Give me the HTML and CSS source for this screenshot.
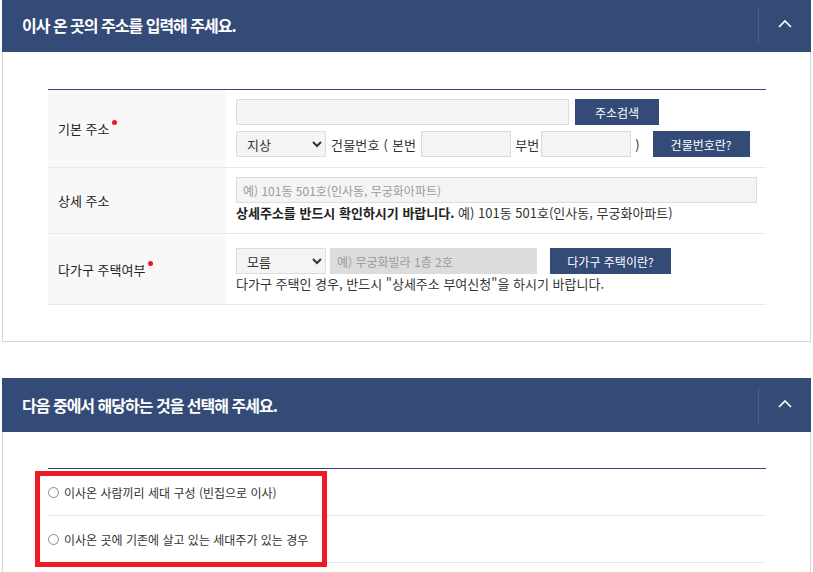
FILE: index.html
```html
<!DOCTYPE html>
<html lang="ko">
<head>
    <meta charset="UTF-8">
    <meta name="viewport" content="width=device-width, initial-scale=1.0">
    <title>전입신고 - 주소 입력</title>
    <link rel="stylesheet" href="styles.css">
</head>
<body>
<div class="page">

    <!-- 주소 입력 -->
    <section class="panel">
        <div class="panel-head">
            <h2 class="panel-title">이사 온 곳의 주소를 입력해 주세요.</h2>
            <button type="button" class="panel-toggle" aria-label="접기">
                <svg width="14" height="9" viewBox="0 0 14 9"><path d="M1 8 L7 2 L13 8" fill="none" stroke="#fff" stroke-width="1.6"/></svg>
            </button>
        </div>
        <div class="panel-body">
            <table class="form-table">
                <tr>
                    <th><span class="req">기본 주소</span></th>
                    <td class="row-addr">
                        <div class="line">
                            <input type="text" class="input-addr">
                            <button type="button" class="btn btn-search">주소검색</button>
                        </div>
                        <div class="line">
                            <select class="select-small">
                                <option>지상</option>
                                <option>지하</option>
                            </select>
                            <span class="txt txt-first">건물번호 ( 본번</span>
                            <input type="text" class="input-num">
                            <span class="txt">부번</span>
                            <input type="text" class="input-num">
                            <span class="txt">)</span>
                            <button type="button" class="btn btn-bldg">건물번호란?</button>
                        </div>
                    </td>
                </tr>
                <tr>
                    <th>상세 주소</th>
                    <td class="row-detail">
                        <div class="line">
                            <input type="text" class="input-detail" placeholder="예) 101동 501호(인사동, 무궁화아파트)">
                        </div>
                        <p class="hint"><strong>상세주소를 반드시 확인하시기 바랍니다.</strong> 예) 101동 501호(인사동, 무궁화아파트)</p>
                    </td>
                </tr>
                <tr>
                    <th><span class="req">다가구 주택여부</span></th>
                    <td class="row-multi">
                        <div class="line">
                            <select class="select-small">
                                <option>모름</option>
                                <option>예</option>
                                <option>아니오</option>
                            </select>
                            <input type="text" class="input-unit" placeholder="예) 무궁화빌라 1층 2호" disabled>
                            <button type="button" class="btn btn-multi">다가구 주택이란?</button>
                        </div>
                        <p class="hint">다가구 주택인 경우, 반드시 "상세주소 부여신청"을 하시기 바랍니다.</p>
                    </td>
                </tr>
            </table>
        </div>
    </section>

    <!-- 세대 구성 선택 -->
    <section class="panel">
        <div class="panel-head">
            <h2 class="panel-title">다음 중에서 해당하는 것을 선택해 주세요.</h2>
            <button type="button" class="panel-toggle" aria-label="접기">
                <svg width="14" height="9" viewBox="0 0 14 9"><path d="M1 8 L7 2 L13 8" fill="none" stroke="#fff" stroke-width="1.6"/></svg>
            </button>
        </div>
        <div class="panel-body panel-body-choices">
            <div class="choice-list">
                <label class="choice">
                    <input type="radio" name="household" class="radio">
                    이사온 사람끼리 세대 구성 (빈집으로 이사)
                </label>
                <label class="choice">
                    <input type="radio" name="household" class="radio">
                    이사온 곳에 기존에 살고 있는 세대주가 있는 경우
                </label>
                <div class="highlight"></div>
            </div>
        </div>
    </section>

</div>
</body>
</html>
```

FILE: styles.css
```css
body {
    margin: 0;
    font-family: "Noto Sans CJK KR", "Noto Sans", sans-serif;
    color: #333;
    background-color: #fff;
}

.page {
    margin-top: -2px; /* page is scrolled a little */
    padding: 0 2px;
}

/* ---- panel ---- */
.panel {
    border: 1px solid #d6d6d6;
    border-top: 0;
    margin-bottom: 36px;
}

.panel-head {
    display: flex;
    align-items: center;
    height: 54px;
    margin: 0 -1px;
    background-color: #344b78;
}

.panel-title {
    flex: 1;
    margin: 0;
    padding-left: 20px;
    color: #fff;
    font-size: 16px;
    font-weight: 700;
    letter-spacing: -1px;
}

.panel-toggle {
    display: flex;
    align-items: center;
    justify-content: center;
    width: 53px;
    height: 35px;
    padding: 0 0 3px;
    border: 0;
    border-left: 1px solid #4b5f8a;
    background: none;
    cursor: pointer;
}

.panel-body {
    padding: 37px 44px 36px 45px;
}

.panel-body-choices {
    padding-top: 36px;
}

/* ---- form table ---- */
.form-table {
    width: 100%;
    border-collapse: collapse;
    border-top: 1px solid #2f4572;
}

.form-table th,
.form-table td {
    border-bottom: 1px solid #e8e8e8;
    vertical-align: middle;
}

.form-table th {
    width: 168px;
    padding: 0 0 0 10px;
    background-color: #f8f8f8;
    text-align: left;
    font-size: 13px;
    font-weight: 400;
    color: #222;
}

.form-table td {
    padding: 9px 0 10px 10px;
}

.form-table td.row-multi {
    padding-top: 14px;
}

.req::after {
    content: "";
    display: inline-block;
    width: 5px;
    height: 5px;
    margin-left: 3px;
    border-radius: 50%;
    background-color: #f0141e;
    vertical-align: 9px;
}

.line {
    display: flex;
    align-items: center;
    height: 26px;
}

.line + .line {
    margin-top: 6px;
}

input[type="text"] {
    height: 26px;
    padding: 0 6px;
    border: 1px solid #dcdcdc;
    background-color: #f4f4f4;
    box-sizing: border-box;
    font-family: inherit;
    font-size: 12px;
    color: #333;
    outline: none;
}

input[type="text"]::placeholder {
    color: #9a9a9a;
}

input[type="text"]:disabled {
    background-color: #dcdcdc;
    border-color: #dcdcdc;
}

.input-addr { width: 333px; }
.input-num { width: 90px; }
.input-detail { width: 521px; }
.input-unit { width: 207px; margin-left: 4px; }

.select-small {
    width: 90px;
    height: 26px;
    padding-left: 6px;
    border: 1px solid #dcdcdc;
    background-color: #f4f4f4;
    font-family: inherit;
    font-size: 13px;
    color: #333;
}

.txt {
    margin: 0 2px 0 4px;
    font-size: 13px;
    color: #333;
    white-space: nowrap;
}

.txt-first {
    margin-left: 5px;
    margin-right: 5px;
    letter-spacing: 0.2px;
}

.btn {
    height: 26px;
    padding: 0;
    border: 0;
    background-color: #344b78;
    color: #fff;
    font-family: inherit;
    font-size: 12px;
    cursor: pointer;
}

.btn-search { width: 84px; margin-left: 6px; }
.btn-bldg { width: 97px; margin-left: 11px; }
.btn-multi { width: 121px; margin-left: 13px; }

.hint {
    margin: 0;
    height: 20px;
    line-height: 20px;
    font-size: 13px;
    color: #333;
    white-space: nowrap;
}

.hint strong {
    color: #222;
}

/* ---- radio choices ---- */
.choice-list {
    position: relative;
    border-top: 1px solid #2f4572;
}

.choice {
    display: flex;
    align-items: center;
    height: 46px;
    border-bottom: 1px solid #e8e8e8;
    font-size: 12px;
    color: #333;
    cursor: pointer;
}

.radio {
    appearance: none;
    width: 11px;
    height: 11px;
    margin: 0 5px 0 0;
    border: 1px solid #8a8a8a;
    border-radius: 50%;
    box-sizing: border-box;
    background-color: #fff;
}

.radio:checked {
    background: radial-gradient(#344b78 0 2px, #fff 2.5px);
}

/* red annotation box drawn over the first two options */
.highlight {
    position: absolute;
    left: -13px;
    top: 2px;
    width: 292px;
    height: 96px;
    border: 5px solid #ec1c24;
    box-sizing: border-box;
    pointer-events: none;
}
```
